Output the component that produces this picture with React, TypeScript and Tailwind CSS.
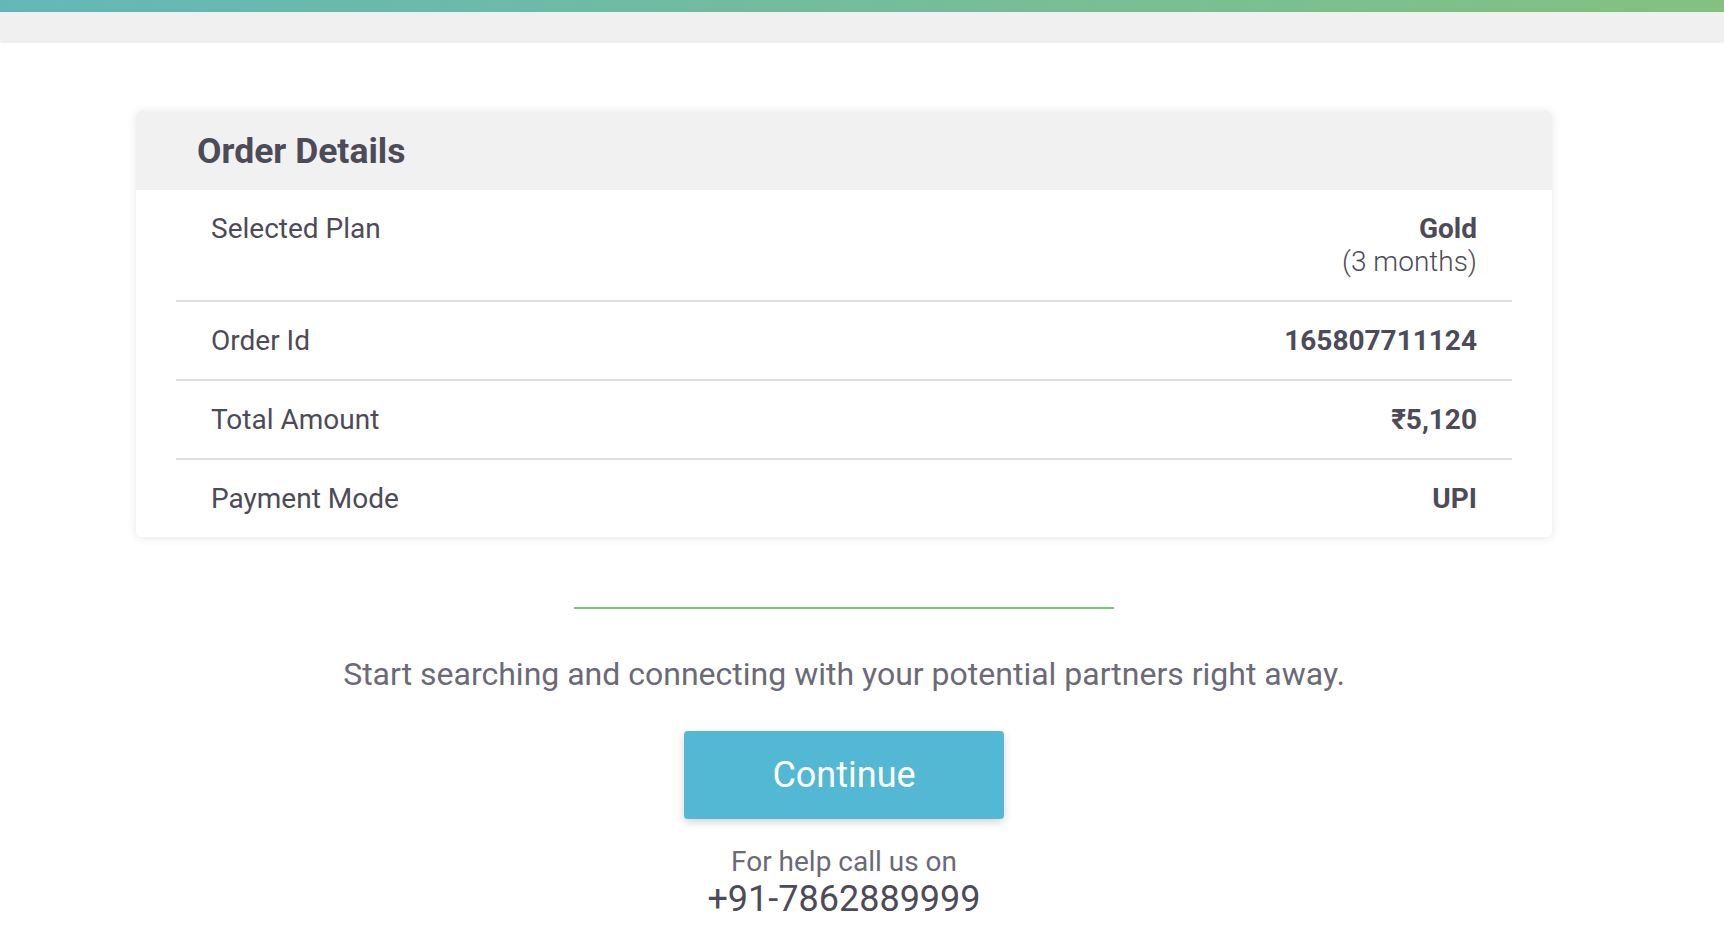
import React from "react";

interface Row {
    label: string;
    value: string;
    sub?: string;
}

const rows: Row[] = [
    { label: "Selected Plan", value: "Gold", sub: "(3 months)" },
    { label: "Order Id", value: "165807711124" },
    { label: "Total Amount", value: "₹5,120" },
    { label: "Payment Mode", value: "UPI" },
];

export default function App() {
    return (
        <div className="min-h-screen bg-white font-['Roboto','Liberation_Sans',sans-serif] text-[#4d4b58]">
            {/* Top bar */}
            <div className="h-[12px] bg-gradient-to-r from-[#63b8b7] to-[#84c17f]" />
            <div className="h-[29px] bg-[#f0f0f0] shadow-[0_1px_3px_rgba(0,0,0,0.12)]" />

            <div className="pr-[36px]">
                {/* Order details card */}
                <div className="mx-auto mt-[70px] w-[1416px] overflow-hidden rounded-[5px] bg-white shadow-[0_1px_10px_rgba(0,0,0,0.1)]">
                    <div className="flex h-[79px] items-center bg-[#f1f1f1] pl-[61px] pt-[3px] text-[35.5px] font-bold">
                        Order Details
                    </div>
                    <div className="mx-[40px]">
                        {rows.map((row, i) => (
                            <div
                                key={row.label}
                                className={
                                    i < rows.length - 1
                                        ? "flex justify-between border-b-2 border-[#dfdfe3] px-[35px] pt-[22px] pb-[22px] text-[28px] leading-[33px]"
                                        : "flex justify-between px-[35px] pt-[22px] pb-[22px] text-[28px] leading-[33px]"
                                }
                            >
                                <span>{row.label}</span>
                                <div className="text-right">
                                    <div className="font-bold">{row.value}</div>
                                    {row.sub && <div className="font-light">{row.sub}</div>}
                                </div>
                            </div>
                        ))}
                    </div>
                </div>

                <div className="mx-auto mt-[70px] h-[2px] w-[540px] bg-[#7dc281]" />

                <p className="mt-[47px] text-center text-[32px] leading-[36px] text-[#6b6a76]">
                    Start searching and connecting with your potential partners right away.
                </p>

                <div className="mt-[39px] flex justify-center">
                    <button className="h-[88px] w-[320px] rounded-[4px] bg-[#53b8d4] text-[36px] text-white shadow-[0_3px_8px_rgba(0,0,0,0.18)]">
                        Continue
                    </button>
                </div>

                <div className="mt-[26px] text-center">
                    <div className="text-[28px] leading-[33px] text-[#6b6a76]">For help call us on</div>
                    <div className="text-[36px] leading-[42px]">+91-7862889999</div>
                </div>
            </div>
        </div>
    );
}
